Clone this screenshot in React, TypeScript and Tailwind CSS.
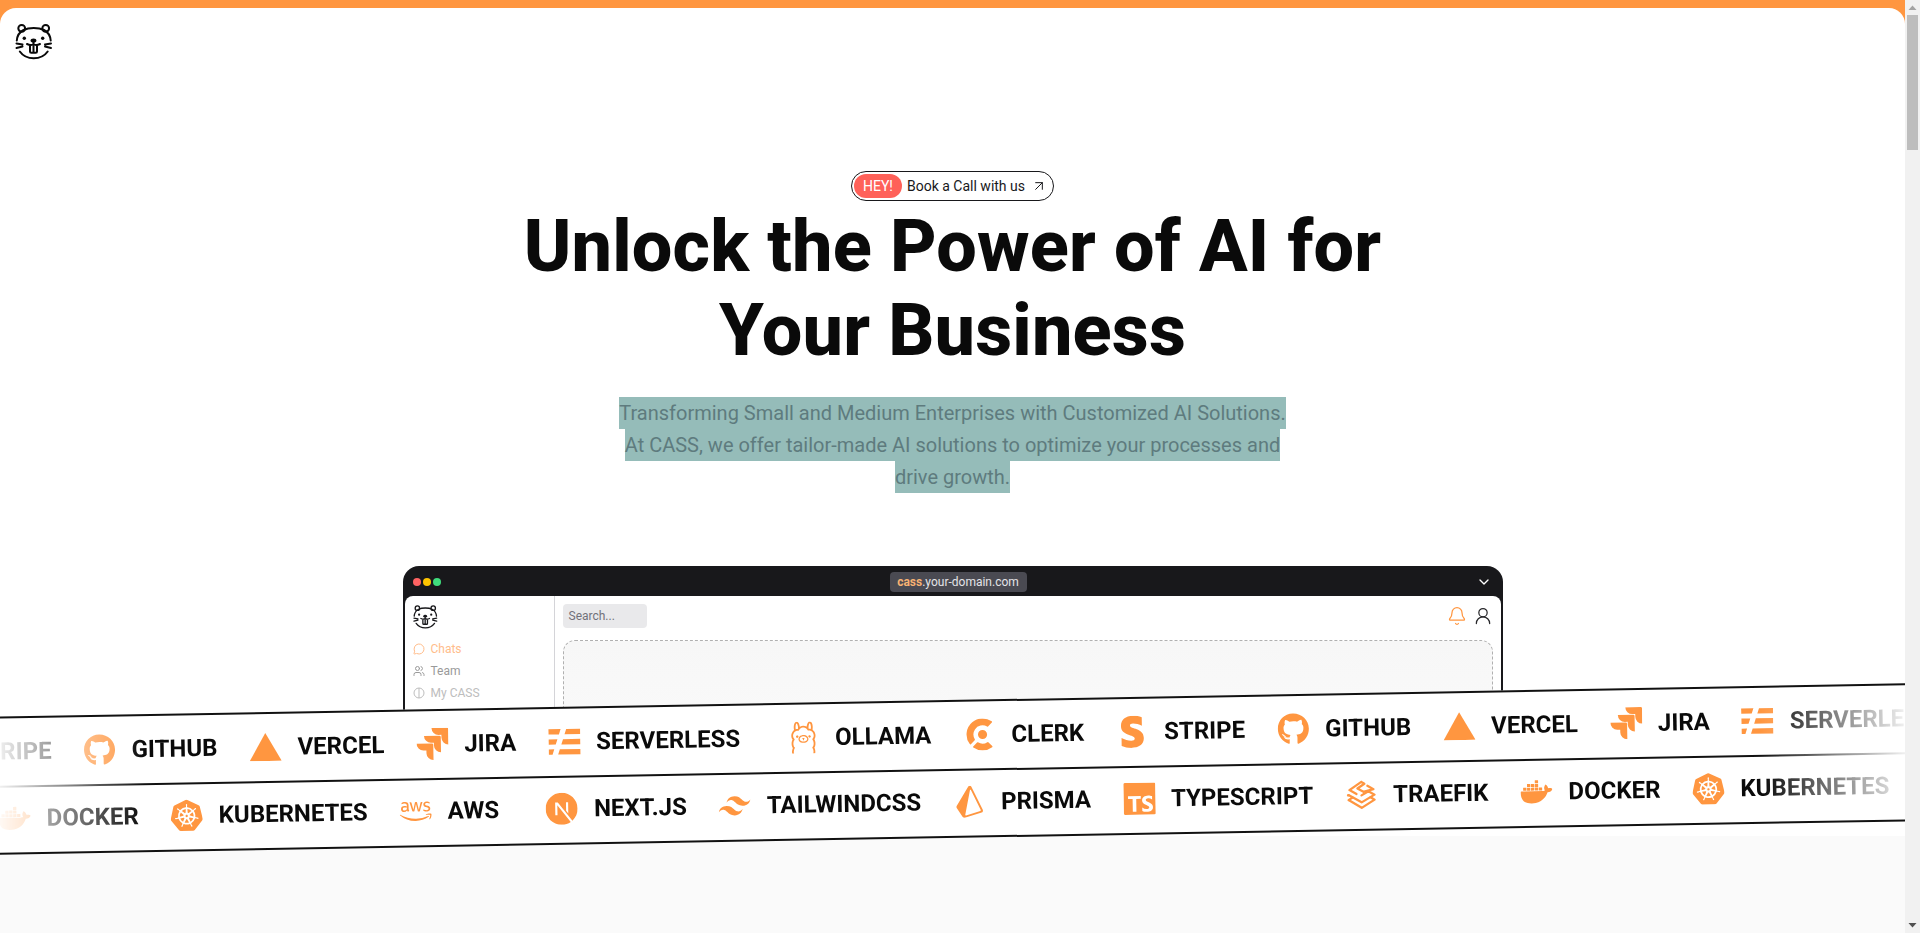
import React from "react";
import { ArrowUpRight, Bell, ChevronDown, MessageCircle, UserRound, Users } from "lucide-react";
import { FaAws, FaGithub, FaStripeS } from "react-icons/fa";
import { SiClerk, SiDocker, SiJira, SiKubernetes, SiNextdotjs, SiOllama, SiPrisma, SiServerless, SiTailwindcss, SiTypescript } from "react-icons/si";

function Beaver({ className }: { className?: string }) {
  return (
    <svg viewBox="0 0 38 38" fill="none" stroke="currentColor" strokeWidth="2" strokeLinecap="round" className={className}>
      <circle cx="6.700" cy="6.300" r="3.400" />
      <circle cx="30.700" cy="6.300" r="3.400" />
      <path d="M1.800 18.500C2.300 13 5 9.800 8.500 8C14 5.400 23.500 5.400 29 8C32.500 9.800 35.200 13 35.700 18.500" />
      <path d="M4.800 29.500C8 34 13 36.300 18.700 36.300S29.500 34 32.700 29.500" />
      <circle cx="9.300" cy="16.300" r="1.700" fill="currentColor" stroke="none" />
      <circle cx="27.700" cy="16.300" r="1.700" fill="currentColor" stroke="none" />
      <ellipse cx="18.500" cy="18.500" rx="2.900" ry="2.100" fill="currentColor" stroke="none" />
      <path d="M18.500 20v2.500M12 22c2.500 1.300 4.800 1.200 6.500 .3 1.700 .9 4 1 6.500 -.3" />
      <path d="M15 24v5.500a1.300 1.300 0 0 0 1.300 1.300h4.400a1.300 1.300 0 0 0 1.300 -1.300V24M18.500 24v6.500" />
      <path d="M1.500 21.500l6 1M1.500 26l6 -1.500M36 21.500l-6 1M36 26l-6 -1.500" />
    </svg>
  );
}

function Triangle({ className }: { className?: string }) {
  return (
    <svg viewBox="0 0 32 28" className={className} fill="currentColor">
      <path d="M16 0 32 28H0z" />
    </svg>
  );
}

function Traefik({ className }: { className?: string }) {
  return (
    <svg viewBox="0 0 32 32" className={className} fill="none" stroke="currentColor" strokeWidth="2.300" strokeLinejoin="round" strokeLinecap="round">
      <path d="M16 3 4 11l7 4M16 3l3 2-7 4.500 6 3.500 10-2.500-6-3.500" />
      <path d="M3 16l13 7.500L29 16l-6-3.500-7 4" />
      <path d="M3 16l-.5 .3M3 21l13 8 13-8-4-2.500M3 21l4-2.500" />
    </svg>
  );
}

type Item = { icon: React.ElementType; label: string; cls: string; ml?: string };

const rowOne: Item[] = [
  { icon: FaStripeS, label: "STRIPE", cls: "h-8 w-8" },
  { icon: FaGithub, label: "GITHUB", cls: "h-8 w-8" },
  { icon: Triangle, label: "VERCEL", cls: "h-7 w-8" },
  { icon: SiJira, label: "JIRA", cls: "h-8 w-8" },
  { icon: SiServerless, label: "SERVERLESS", cls: "h-8 w-8" },
  { icon: SiOllama, label: "OLLAMA", cls: "h-8 w-8", ml: "ml-[15px]" },
  { icon: SiClerk, label: "CLERK", cls: "h-8 w-8" },
  { icon: FaStripeS, label: "STRIPE", cls: "h-8 w-8" },
  { icon: FaGithub, label: "GITHUB", cls: "h-8 w-8" },
  { icon: Triangle, label: "VERCEL", cls: "h-7 w-8" },
  { icon: SiJira, label: "JIRA", cls: "h-8 w-8" },
  { icon: SiServerless, label: "SERVERLESS", cls: "h-8 w-8" },
];

const rowTwo: Item[] = [
  { icon: SiDocker, label: "DOCKER", cls: "h-8 w-8" },
  { icon: SiKubernetes, label: "KUBERNETES", cls: "h-8 w-8" },
  { icon: FaAws, label: "AWS", cls: "h-8 w-8" },
  { icon: SiNextdotjs, label: "NEXT.JS", cls: "h-8 w-8", ml: "ml-[15px]" },
  { icon: SiTailwindcss, label: "TAILWINDCSS", cls: "h-8 w-8" },
  { icon: SiPrisma, label: "PRISMA", cls: "h-8 w-8" },
  { icon: SiTypescript, label: "TYPESCRIPT", cls: "h-8 w-8" },
  { icon: Traefik, label: "TRAEFIK", cls: "h-8 w-8" },
  { icon: SiDocker, label: "DOCKER", cls: "h-8 w-8" },
  { icon: SiKubernetes, label: "KUBERNETES", cls: "h-8 w-8" },
];

function Row({ items, offset, lined }: { items: Item[]; offset: string; lined?: boolean }) {
  return (
    <div className={`h-[67px] overflow-hidden ${lined ? "border-t-2 border-[#111] pb-[4px]" : "pb-[2px]"}`}>
      <div className={`flex h-full w-max items-center gap-8 ${offset}`}>
        {items.map((item, i) => {
          const Icon = item.icon;
          return (
            <div key={i} className={`flex items-center gap-4 ${item.ml ?? ""}`}>
              <Icon className={`shrink-0 text-[#ff9640] ${item.cls}`} />
              <span className="text-2xl font-bold text-[#0a0a0a]">{item.label}</span>
            </div>
          );
        })}
      </div>
    </div>
  );
}

function MockWindow() {
  return (
    <div className="h-[220px] w-[1100px] shrink-0 overflow-hidden rounded-t-2xl bg-[#18181b] px-[2px]">
      <div className="relative flex h-[30px] items-center gap-[2px] pl-2 pr-[9px] pt-[1px]">
        <span className="h-2 w-2 rounded-full bg-[#ff6363]" />
        <span className="h-2 w-2 rounded-full bg-[#fdc400]" />
        <span className="h-2 w-2 rounded-full bg-[#3fdc7c]" />
        <div className="absolute left-[485px] top-[6px] flex h-[20px] w-[137px] items-center justify-center rounded bg-[#4a4a52] text-xs text-[#e4e4e7]">
          <span className="font-bold text-[#f7b273]">cass</span>.your-domain.com
        </div>
        <ChevronDown className="ml-auto h-4 w-4 text-white" />
      </div>
      <div className="flex h-[270px] rounded-t-lg bg-white">
        <div className="w-[150px] shrink-0 border-r border-[#d4d4d8] px-2 py-2">
          <Beaver className="h-[25px] w-[25px] text-[#18181b]" />
          <div className="mt-[9px] flex flex-col text-xs leading-[22px]">
            <div className="flex items-center gap-[6px] text-[#ffbd8c]">
              <MessageCircle className="h-3 w-3" /> Chats
            </div>
            <div className="flex items-center gap-[6px] text-[#9a9a9a]">
              <Users className="h-3 w-3" /> Team
            </div>
            <div className="flex items-center gap-[6px] text-[#bdbdbd]">
              <svg viewBox="0 0 12 12" fill="none" stroke="currentColor" className="h-3 w-3">
                <circle cx="6" cy="6" r="5" />
                <path d="M6 1v10" />
              </svg>
              My CASS
            </div>
          </div>
        </div>
        <div className="flex-1 px-2 py-2">
          <div className="flex items-center">
            <div className="flex h-6 w-[84px] items-center rounded bg-[#e9e9eb] px-[6px] text-xs text-[#71717a]">Search...</div>
            <Bell className="ml-auto h-[20px] w-[20px] text-[#ff9640]" strokeWidth={1.500} />
            <UserRound className="ml-[6px] h-[20px] w-[20px] text-[#27272a]" strokeWidth={1.500} />
          </div>
          <div className="mt-3 h-[300px] rounded-xl border border-dashed border-[#b0b0b0] bg-gradient-to-b from-[#f7f7f7] to-white" />
        </div>
      </div>
    </div>
  );
}

function Scrollbar() {
  return (
    <div className="flex h-full w-[15px] shrink-0 flex-col items-center bg-[#f1f1f1]">
      <svg viewBox="0 0 15 15" className="h-[15px] w-[15px] shrink-0 text-[#a3a3a3]" fill="currentColor">
        <path d="M3.500 10 7.500 5.500 11.500 10z" />
      </svg>
      <div className="h-[135px] w-[11px] bg-[#bdbdbd]" />
      <svg viewBox="0 0 15 15" className="mt-auto h-[15px] w-[15px] shrink-0 text-[#505050]" fill="currentColor">
        <path d="M3.500 5 7.500 9.500 11.500 5z" />
      </svg>
    </div>
  );
}

export default function App() {
  return (
    <div className="flex h-screen overflow-hidden font-['Roboto',sans-serif]">
      <div className="relative w-[1905px] shrink-0 overflow-hidden bg-[#ff9640] pt-2">
        <div className="flex h-[828px] flex-col overflow-hidden rounded-t-2xl bg-white">
          <div className="pl-[15px] pt-[14px]">
            <Beaver className="h-[38px] w-[38px] text-[#0a0a0a]" />
          </div>
          <div className="mt-[111px] flex flex-col items-center">
            <a className="flex h-[30px] w-[203px] items-center rounded-full border border-[#18181b] pl-[2px] text-sm text-[#18181b]">
              <span className="flex h-6 w-[48px] items-center justify-center rounded-full bg-[#ff6159] text-white">HEY!</span>
              <span className="ml-[5px]">Book a Call with us</span>
              <ArrowUpRight className="ml-[6px] h-4 w-4" strokeWidth={1.500} />
            </a>
            <h1 className="mt-[4px] w-[900px] text-center text-7xl font-extrabold leading-[84px] tracking-[0.15px] text-[#0a0a0a]">
              Unlock the Power of AI for Your Business
            </h1>
            <p className="mt-6 text-center text-xl leading-8 text-[#5e7b7e]">
              <span className="mx-auto block w-fit bg-[#95bcb9]">Transforming Small and Medium Enterprises with Customized AI Solutions.</span>
              <span className="mx-auto block w-fit bg-[#95bcb9]">At CASS, we offer tailor-made AI solutions to optimize your processes and</span>
              <span className="mx-auto block w-fit bg-[#95bcb9]">drive growth.</span>
            </p>
            <div className="mt-[73px]">
              <MockWindow />
            </div>
          </div>
        </div>
        <div className="h-[97px] bg-[#fafafa]" />
        <div className="absolute left-[-10px] top-[700px] w-[1925px] -rotate-1 border-y-2 border-[#111] bg-white">
          <div className="[mask-image:linear-gradient(to_right,transparent,black_8%,black_92%,transparent)]">
            <Row items={rowOne} offset="ml-[-67px]" />
            <Row items={rowTwo} offset="ml-[8px]" lined />
          </div>
        </div>
      </div>
      <Scrollbar />
    </div>
  );
}
